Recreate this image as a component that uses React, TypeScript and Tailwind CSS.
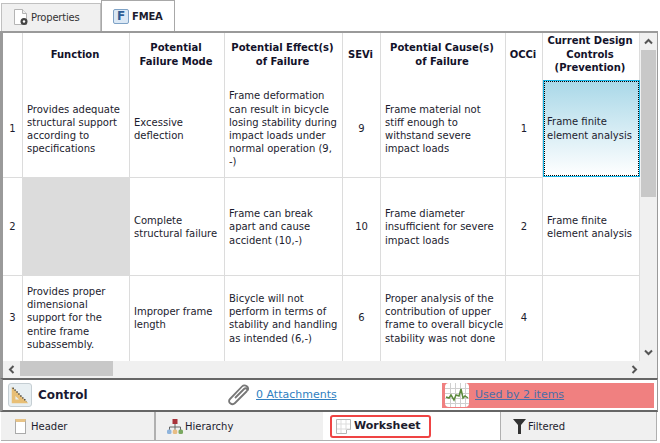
const font = "font-['DejaVu_Sans',sans-serif]";

const widths = "grid-cols-[20px_107px_95px_118px_38px_125px_37px_97px]";

function Cell({ children, center, className = "" }: { children?: React.ReactNode; center?: boolean; className?: string }) {
  return (
    <div className={`flex items-center border-r border-b border-[#dcdcdc] pt-[1px] pl-[4px] text-[10px] leading-[13.2px] text-[#1c1c2e] ${center ? "justify-center !pl-0 text-center" : ""} ${className}`}>
      <span className="whitespace-pre">{children}</span>
    </div>
  );
}

function Head({ children }: { children: React.ReactNode }) {
  return (
    <div className="flex items-center justify-center whitespace-pre border-r border-[#dcdcdc] pr-[2px] pb-[4px] text-center text-[10px] font-bold leading-[13.5px] text-[#12122a]">
      {children}
    </div>
  );
}

function PropsIcon() {
  return (
    <svg width="15" height="17" viewBox="0 0 15 17" className="shrink-0">
      <path d="M.5.500h8l4 4v11h-12z" fill="#fff" stroke="#b5b5b5" />
      <path d="M8.500.500v4h4" fill="#eee" stroke="#b5b5b5" />
      <circle cx="10" cy="12.500" r="3.500" fill="#444" />
      <circle cx="10" cy="12.500" r="1.200" fill="#fff" />
    </svg>
  );
}

function ControlIcon() {
  return (
    <svg width="24" height="24" viewBox="0 0 24 24" className="rounded-[3px] border border-[#c5ced3] bg-[#e8eff2]">
      <path d="M3 3v18h18z" fill="#e8bf76" />
      <path d="M7 13v4h4z" fill="#e8eff2" />
      <path d="M4 4l15 15" stroke="#3a3a3a" strokeWidth="1.500" strokeDasharray="1.500 1.500" />
    </svg>
  );
}

function ClipIcon() {
  return (
    <svg width="24" height="22" viewBox="0 0 24 22" fill="none" stroke="#777" strokeWidth="1.800" className="shrink-0">
      <path d="M9 14 18 5c2-2 4.500.5 2.500 2.500L9 19c-3 3-8-1-5-4L16 2.500c3-3 8 1 5.500 4" />
    </svg>
  );
}

function ChartIcon() {
  return (
    <svg width="24" height="24" viewBox="0 0 24 24" className="shrink-0 rounded-[4px] bg-white">
      <path d="M0 5.500h24M0 10.500h24M0 15.500h24M0 20.500h24M5.500 0v24M10.500 0v24M15.500 0v24M20.500 0v24" stroke="#cfcfcf" />
      <path d="M1 14l3 1 2-3 3 5 2-5 3 1 2-7 2 9 2-2 3 2" fill="none" stroke="#5c8a3c" strokeWidth="1.500" />
    </svg>
  );
}

function HierarchyIcon() {
  return (
    <svg width="16" height="15" viewBox="0 0 16 15" className="shrink-0">
      <rect x="5.500" y="0" width="5" height="5" fill="#a8323a" />
      <path d="M8 5v6M2.500 11V8h11v3" stroke="#666" fill="none" />
      <rect x="0" y="10.500" width="4.500" height="4.500" rx="1.500" fill="#8fb4dc" />
      <rect x="5.750" y="10.500" width="4.500" height="4.500" rx="1.500" fill="#e8bd84" />
      <rect x="11.500" y="10.500" width="4.500" height="4.500" rx="1.500" fill="#7aa860" />
    </svg>
  );
}

export default function App() {
  return (
    <div className={`flex h-[443px] w-[660px] flex-col overflow-hidden bg-white ${font} text-[#1c1c2e]`}>
      <div className="flex h-[31px] items-end pl-px">
        <div className="flex h-[28px] w-[100px] items-center gap-[2px] border border-b-0 border-[#c0c0c0] bg-[#f0f0f0] pl-3 text-[10px] tracking-[-0.2px] text-[#333]">
          <PropsIcon />
          Properties
        </div>
        <div className="flex h-[31px] w-[74px] items-center gap-[3px] border border-b-0 border-[#a8a8a8] bg-white pl-[11px] text-[10px] font-bold tracking-[-0.2px]">
          <span className="flex h-[15px] w-[16px] items-center justify-center rounded-[2px] border border-[#7ea2c6] bg-[#dbe8f5] text-[12px] font-bold leading-none text-[#2c5c94]">F</span>
          FMEA
        </div>
      </div>

      <div className="flex h-[347px] w-[658px] flex-col border-t-2 border-r border-l-3 border-[#9a9a9a]">
        <div className="flex h-[328px]">
          <div className="h-[328px] w-[637px] overflow-hidden">
            <div className={`grid ${widths} grid-rows-[47px_98px_98px_98px]`}>
              <Head>{""}</Head>
              <Head>Function</Head>
              <Head>{"Potential\nFailure Mode"}</Head>
              <Head>{"Potential Effect(s)\nof Failure"}</Head>
              <Head>SEVi</Head>
              <Head>{"Potential Cause(s)\nof Failure"}</Head>
              <Head>OCCi</Head>
              <Head>{"Current Design\nControls\n(Prevention)"}</Head>

              <Cell center>1</Cell>
              <Cell>{"Provides adequate\nstructural support\naccording to\nspecifications"}</Cell>
              <Cell>{"Excessive\ndeflection"}</Cell>
              <Cell>{"Frame deformation\ncan result in bicycle\nlosing stability during\nimpact loads under\nnormal operation (9,\n-)"}</Cell>
              <Cell center>9</Cell>
              <Cell>{"Frame material not\nstiff enough to\nwithstand severe\nimpact loads"}</Cell>
              <Cell center>1</Cell>
              <div className="mb-px flex items-center border border-[#12b5e8] bg-gradient-to-b from-[#a9d8e8] to-white text-[10px] leading-[13.2px] outline-1 -outline-offset-2 outline-black outline-dotted">
                <span className="whitespace-pre pl-[3px]">{"Frame finite\nelement analysis"}</span>
              </div>

              <Cell center>2</Cell>
              <Cell className="bg-[#dcdcdc]" />
              <Cell>{"Complete\nstructural failure"}</Cell>
              <Cell>{"Frame can break\napart and cause\naccident (10,-)"}</Cell>
              <Cell center>10</Cell>
              <Cell>{"Frame diameter\ninsufficient for severe\nimpact loads"}</Cell>
              <Cell center>2</Cell>
              <Cell>{"Frame finite\nelement analysis"}</Cell>

              <Cell center className="!items-start !pt-[35px]">3</Cell>
              <Cell className="!items-start !pt-[9px]">{"Provides proper\ndimensional\nsupport for the\nentire frame\nsubassembly."}</Cell>
              <Cell className="!items-start !pt-[29px]">{"Improper frame\nlength"}</Cell>
              <Cell className="!items-start !pt-[16px]">{"Bicycle will not\nperform in terms of\nstability and handling\nas intended (6,-)"}</Cell>
              <Cell center className="!items-start !pt-[35px]">6</Cell>
              <Cell className="!items-start !pt-[16px]">{"Proper analysis of the\ncontribution of upper\nframe to overall bicycle\nstability was not done"}</Cell>
              <Cell center className="!items-start !pt-[35px]">4</Cell>
              <Cell />
            </div>
          </div>
          <div className="flex w-[17px] flex-col bg-[#f0f0f0]">
            <div className="flex h-[17px] items-center justify-center">
              <svg width="9" height="7" viewBox="0 0 9 7" fill="none" stroke="#555" strokeWidth="2"><path d="M1 5.500 4.500 2 8 5.500" /></svg>
            </div>
            <div className="mr-px ml-px h-[147px] bg-[#c8c8c8]" />
            <div className="flex-1" />
            <div className="flex h-[17px] items-center justify-center">
              <svg width="9" height="7" viewBox="0 0 9 7" fill="none" stroke="#555" strokeWidth="2"><path d="M1 1.500 4.500 5 8 1.500" /></svg>
            </div>
          </div>
        </div>
        <div className="flex h-[17px] items-center bg-[#f0f0f0]">
          <div className="flex w-[17px] justify-center">
            <svg width="7" height="9" viewBox="0 0 7 9" fill="none" stroke="#555" strokeWidth="2"><path d="M5.500 1 2 4.500 5.500 8" /></svg>
          </div>
          <div className="mb-[2px] h-[15px] w-[93px] bg-[#c8c8c8]" />
          <div className="flex-1" />
          <div className="flex w-[26px] justify-start">
            <svg width="7" height="9" viewBox="0 0 7 9" fill="none" stroke="#555" strokeWidth="2"><path d="M1.500 1 5 4.500 1.500 8" /></svg>
          </div>
        </div>
      </div>

      <div className="flex h-[34px] w-[658px] items-center border-y-2 border-r border-l-3 border-[#666] border-l-[#9a9a9a] border-r-[#9a9a9a] bg-white pl-[5px]">
        <ControlIcon />
        <span className="ml-[6px] w-[188px] text-[12px] font-bold text-[#1a1a33]">Control</span>
        <div className="flex w-[216px] items-center gap-[6px]">
          <ClipIcon />
          <span className="text-[11px] text-[#2f7fc1] underline">0 Attachments</span>
        </div>
        <div className="flex h-[25px] w-[212px] items-center gap-[6px] overflow-hidden bg-[#f08080] pl-[3px] text-[11px] text-[#4a6ea8] underline">
          <ChartIcon />
          <span>Used by 2 items</span>
        </div>
      </div>

      <div className="flex h-[29px] w-[657px] items-stretch pl-px text-[10px]">
        <div className="flex w-[155px] items-center gap-[5px] border-r-2 border-b border-[#b0b0b0] bg-[#f0f0f0] pl-[14px]">
          <div className="h-[15px] w-[11px] shrink-0 border border-t-[3px] border-[#aaa] border-t-[#e8c488] bg-white" />
          Header
        </div>
        <div className="flex w-[167px] items-center gap-[2px] border-b border-[#b0b0b0] bg-[#f0f0f0] pl-[11px]">
          <HierarchyIcon />
          Hierarchy
        </div>
        <div className="flex w-[177px] items-center border-b border-[#b0b0b0] bg-white pl-[7px]">
          <div className="flex h-[23px] w-[101px] items-center gap-[3px] rounded-[3px] border-2 border-[#ef4444] pl-[4px] text-[11px] font-bold">
            <svg width="15" height="15" viewBox="0 0 15 15" className="shrink-0">
              <path d="M.5.500h14v10h-4v4h-10z" fill="#fff" stroke="#b5b5b5" />
              <path d="M5 1v13M10 1v10M1 5h13M1 10h13" stroke="#ddd" />
            </svg>
            Worksheet
          </div>
        </div>
        <div className="flex w-[157px] items-center gap-[2px] border-r border-b border-l border-[#b0b0b0] bg-[#f0f0f0] pl-[12px]">
          <svg width="13" height="16" viewBox="0 0 13 16" className="shrink-0"><path d="M0 1h13L8 7v9H5V7z" fill="#333" /></svg>
          Filtered
        </div>
      </div>
    </div>
  );
}
